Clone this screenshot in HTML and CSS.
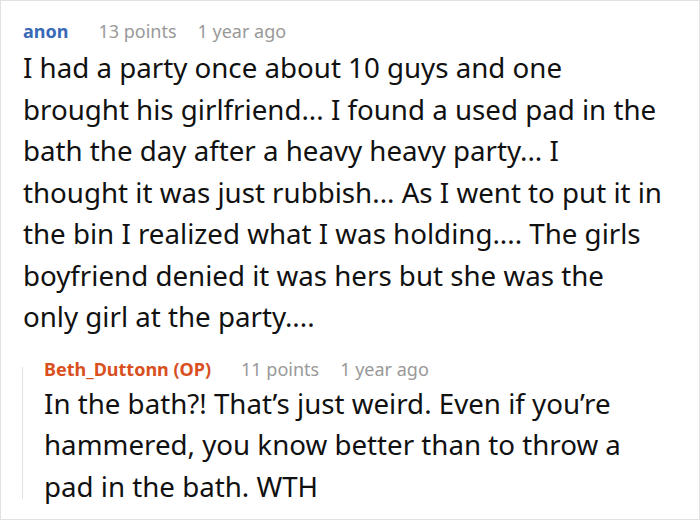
FILE: index.html
```html
<!DOCTYPE html>
<html>
<head>
<meta charset="utf-8">
<link rel="stylesheet" href="styles.css">
</head>
<body>
<div class="frame">
  <div class="comment">
    <div class="meta">
      <span class="author">anon</span>
      <span class="points">13 points</span>
      <span class="time">1 year ago</span>
    </div>
    <p class="text">I had a party once about 10 guys and one brought his girlfriend... I found a used pad in the bath the day after a heavy heavy party... I thought it was just rubbish... As I went to put it in the bin I realized what I was holding.... The girls boyfriend denied it was hers but she was the only girl at the party....</p>
  </div>
  <div class="reply">
    <div class="meta">
      <span class="author op">Beth_Duttonn (OP)</span>
      <span class="points">11 points</span>
      <span class="time">1 year ago</span>
    </div>
    <p class="text">In the bath?! That’s just weird. Even if you’re hammered, you know better than to throw a pad in the bath. WTH</p>
  </div>
</div>
</body>
</html>
```
FILE: styles.css
```css
html, body {
  margin: 0;
  padding: 0;
  background: #fff;
}
.frame {
  box-sizing: border-box;
  width: 700px;
  height: 520px;
  border: 1px solid #e2e2e2;
  padding: 18px 37px 0 22px;
  font-family: "Noto Sans", "Open Sans", sans-serif;
  overflow: hidden;
}
.meta {
  display: flex;
  align-items: baseline;
  font-size: 18px;
  line-height: 24px;
  color: #999;
}
.author {
  font-weight: 700;
  color: #3a69b7;
  margin-right: 30px;
}
.author.op {
  color: #d9501f;
}
.points {
  margin-right: 21px;
}
.text {
  margin: 4px 0 0;
  font-size: 27.7px;
  line-height: 41.5px;
  color: #111;
}
.reply {
  position: relative;
  margin: 19px 0 0 -1px;
  padding-left: 22px;
}
.reply::before {
  content: "";
  position: absolute;
  left: 0;
  top: 10px;
  bottom: 8px;
  width: 1px;
  background: #e2e2e2;
}
.reply .text {
  margin-top: 2px;
}
```
